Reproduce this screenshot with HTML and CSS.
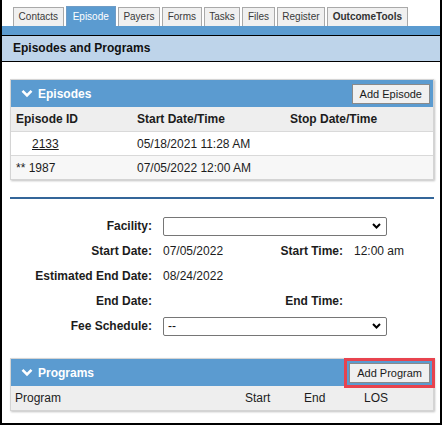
FILE: index.html
```html
<!DOCTYPE html>
<html>
<head>
<meta charset="utf-8">
<link rel="stylesheet" href="styles.css">
</head>
<body>
<div class="frame">
  <div class="tabs">
    <div class="tab">Contacts</div>
    <div class="tab active">Episode</div>
    <div class="tab">Payers</div>
    <div class="tab">Forms</div>
    <div class="tab">Tasks</div>
    <div class="tab">Files</div>
    <div class="tab">Register</div>
    <div class="tab strong">OutcomeTools</div>
  </div>
  <div class="bluebar"></div>
  <div class="band">Episodes and Programs</div>

  <div class="content">
    <div class="panel">
      <div class="ph">
        <div class="ph-title">
          <svg class="chev" width="12" height="9" viewBox="0 0 12 9"><polyline points="1.5,1.8 6,6.3 10.5,1.8" fill="none" stroke="#fff" stroke-width="2.6"/></svg>
          <span>Episodes</span>
        </div>
        <button class="btn">Add Episode</button>
      </div>
      <div class="row ep thead">
        <div class="cell">Episode ID</div>
        <div class="cell">Start Date/Time</div>
        <div class="cell">Stop Date/Time</div>
      </div>
      <div class="row ep">
        <div class="cell"><a class="link">2133</a></div>
        <div class="cell">05/18/2021 11:28 AM</div>
        <div class="cell"></div>
      </div>
      <div class="row ep alt">
        <div class="cell">** 1987</div>
        <div class="cell">07/05/2022 12:00 AM</div>
        <div class="cell"></div>
      </div>
    </div>

    <div class="sep"></div>

    <div class="form">
      <div class="lbl">Facility:</div>
      <div class="sel wide">
        <select><option></option></select>
        <svg class="sel-arrow" width="9" height="6" viewBox="0 0 9 6"><polyline points="1,1 4.5,4.5 8,1" fill="none" stroke="#000" stroke-width="2"/></svg>
      </div>

      <div class="lbl">Start Date:</div>
      <div class="val">07/05/2022</div>
      <div class="lbl">Start Time:</div>
      <div class="val">12:00 am</div>

      <div class="lbl">Estimated End Date:</div>
      <div class="val">08/24/2022</div>
      <div class="lbl"></div>
      <div class="val"></div>

      <div class="lbl">End Date:</div>
      <div class="val"></div>
      <div class="lbl">End Time:</div>
      <div class="val"></div>

      <div class="lbl">Fee Schedule:</div>
      <div class="sel wide">
        <select><option>--</option></select>
        <svg class="sel-arrow" width="9" height="6" viewBox="0 0 9 6"><polyline points="1,1 4.5,4.5 8,1" fill="none" stroke="#000" stroke-width="2"/></svg>
      </div>
    </div>

    <div class="panel programs">
      <div class="ph">
        <div class="ph-title">
          <svg class="chev" width="12" height="9" viewBox="0 0 12 9"><polyline points="1.5,1.8 6,6.3 10.5,1.8" fill="none" stroke="#fff" stroke-width="2.6"/></svg>
          <span>Programs</span>
        </div>
        <button class="btn highlight">Add Program</button>
      </div>
      <div class="row pg thead">
        <div class="cell">Program</div>
        <div class="cell">Start</div>
        <div class="cell">End</div>
        <div class="cell">LOS</div>
      </div>
    </div>
  </div>
</div>
</body>
</html>
```

FILE: styles.css
```css
html, body {
  margin: 0;
  padding: 0;
  background: #fff;
  overflow: hidden;
}
body {
  font-family: "Liberation Sans", Arial, sans-serif;
  font-size: 12px;
  color: #1c1c1c;
}
.frame {
  width: 438px;
  height: 423px;
  border: 2px solid #000;
  border-top: 0;
}
.tabs {
  display: flex;
  align-items: flex-end;
  gap: 2px;
  height: 20px;
  padding: 6px 0 0 11px;
}
.tab {
  box-sizing: border-box;
  height: 19px;
  line-height: 18px;
  padding: 0 4.6px;
  border: 1px solid #a9a9a9;
  border-bottom: 0;
  background: #f0f0f0;
  color: #3a3a3a;
  font-size: 10px;
}
.tab.active {
  height: 20px;
  line-height: 19px;
  padding: 0 6px;
  background: #5b9bd0;
  border-color: #6f9cc6;
  color: #fff;
}
.tab.strong {
  font-weight: bold;
  color: #333;
}
.bluebar {
  height: 9px;
  background: #5b9bd0;
  border-bottom: 1px solid #000;
}
.band {
  height: 25px;
  line-height: 25px;
  background: #bed4ea;
  border-bottom: 1px solid #000;
  padding-left: 11px;
  font-weight: bold;
  color: #111;
}
.content {
  padding: 17px 6px 0 8px;
}
.panel {
  border: 1px solid #d4d4d4;
  box-shadow: 1px 1px 2px rgba(0, 0, 0, 0.25);
}
.ph {
  height: 27px;
  background: #5b9bd0;
  display: flex;
  align-items: center;
  justify-content: space-between;
  padding: 0 3px 0 10px;
}
.ph-title {
  display: flex;
  align-items: center;
  gap: 5px;
  color: #fff;
  font-weight: bold;
}
.chev {
  display: block;
}
.btn {
  box-sizing: border-box;
  height: 20px;
  padding: 0 7px;
  font-family: "Liberation Sans", Arial, sans-serif;
  font-size: 11px;
  color: #1a1a1a;
  background: #f0f0f0;
  border: 1px solid #8a8a8a;
  border-radius: 0;
  margin: 0;
}
.btn.highlight {
  box-shadow: 0 0 0 2px #5b9bd0, 0 0 0 5px #e8434e;
}
.row {
  display: grid;
  align-items: center;
}
.row.ep {
  grid-template-columns: 121px 153px 1fr;
  height: 23px;
  border-bottom: 1px solid #d9d9d9;
  background: #fff;
}
.row.ep:last-child {
  border-bottom: 0;
}
.row.thead {
  background: #eeeeee;
  height: 24px;
}
.row.ep.thead .cell {
  font-weight: bold;
}
.row.alt {
  background: #f7f7f7;
}
.cell {
  padding-left: 5px;
  white-space: nowrap;
}
.link {
  margin-left: 16px;
  text-decoration: underline;
  color: #1c1c1c;
}
.sep {
  height: 2px;
  background: #346699;
  margin-top: 17px;
}
.form {
  display: grid;
  grid-template-columns: 140px 96px 73px auto;
  grid-auto-rows: 20px;
  column-gap: 11px;
  row-gap: 5px;
  align-items: center;
  margin-top: 17px;
  margin-left: 2px;
}
.lbl {
  text-align: right;
  font-weight: bold;
  white-space: nowrap;
}
.val {
  white-space: nowrap;
}
.sel {
  position: relative;
  width: 224px;
  height: 19px;
}
.sel.wide {
  grid-column: 2 / 5;
}
.sel select {
  appearance: none;
  -webkit-appearance: none;
  box-sizing: border-box;
  width: 224px;
  height: 19px;
  margin: 0;
  padding: 0 4px;
  border: 1px solid #767676;
  border-radius: 2px;
  background: #fff;
  font-family: "Liberation Sans", Arial, sans-serif;
  font-size: 12px;
  color: #111;
}
.sel-arrow {
  position: absolute;
  right: 6px;
  top: 6px;
  pointer-events: none;
}
.programs {
  margin-top: 22px;
}
.row.pg {
  grid-template-columns: 230px 59px 60px 1fr;
}
.row.pg .cell {
  padding-left: 4px;
}
```
